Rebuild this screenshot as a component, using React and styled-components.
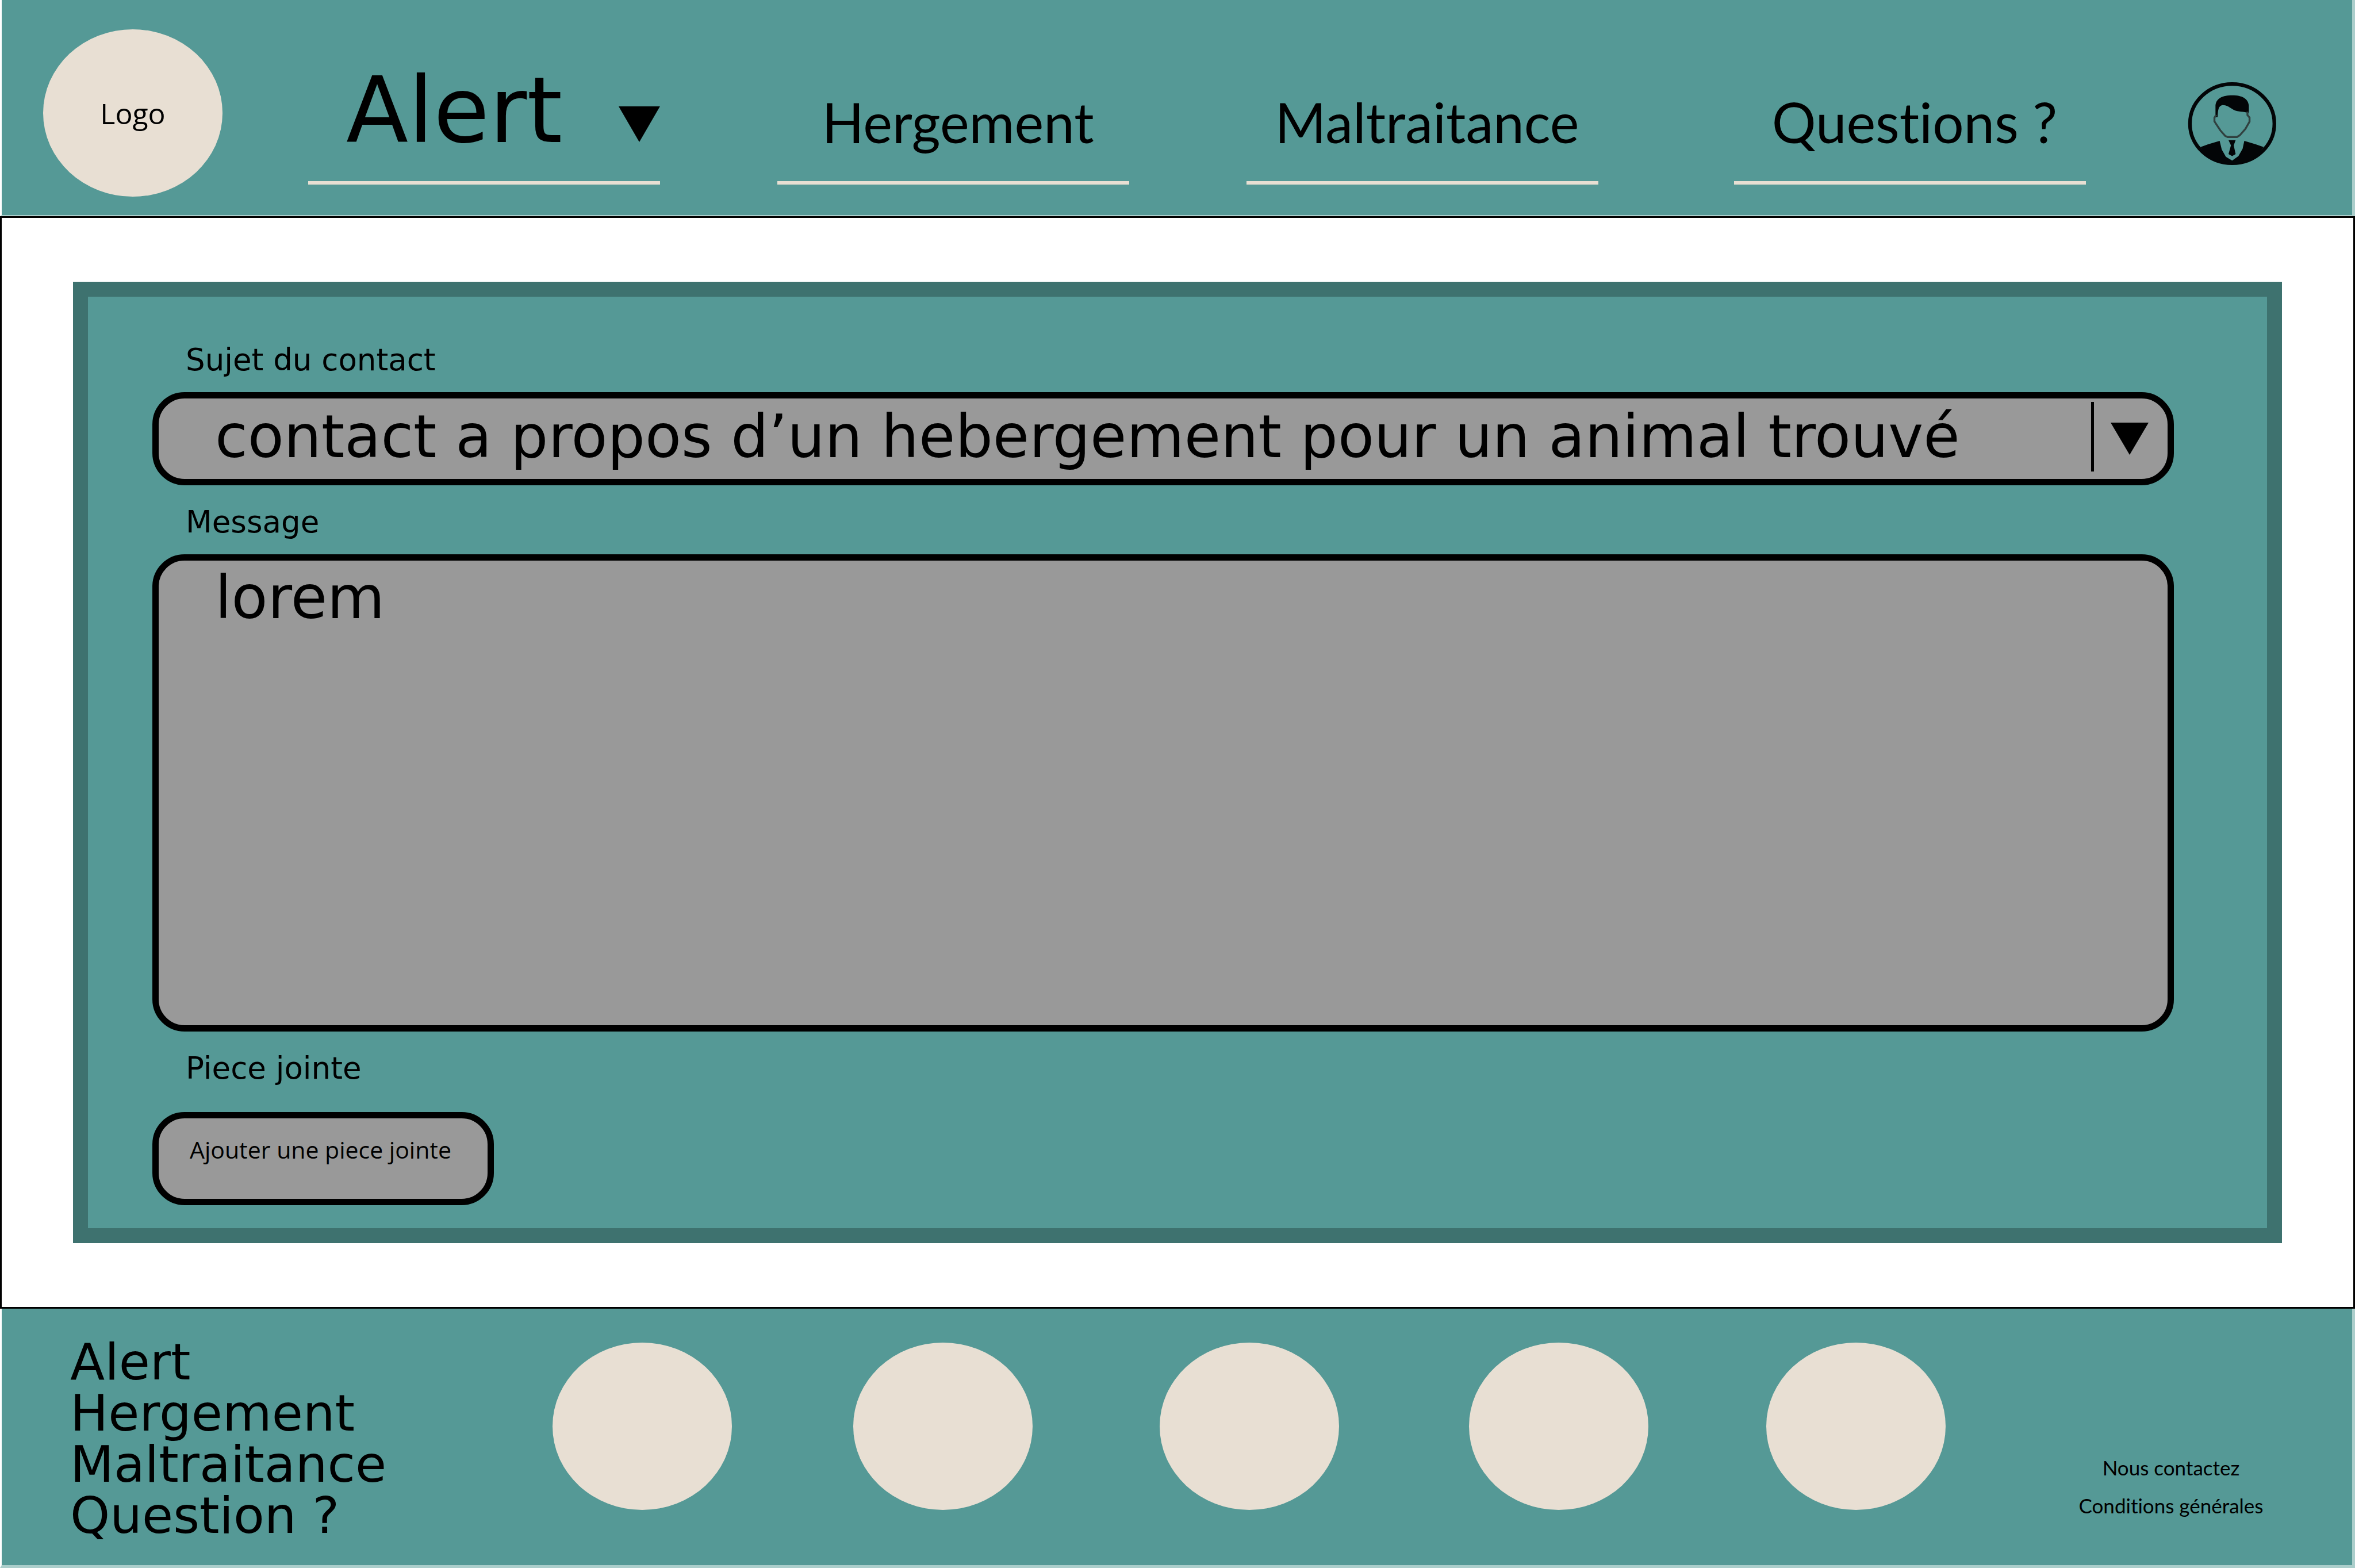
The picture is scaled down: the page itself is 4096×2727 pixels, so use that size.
import React from "react";
import styled, { createGlobalStyle } from "styled-components";

const teal = "#559996";
const tealDark = "#3e726f";
const tealPale = "#abcecb";
const cream = "#e8dfd3";
const grey = "#999999";

const wide = '"DejaVu Sans", "Open Sans", sans-serif';
const regular = '"Open Sans", "Noto Sans", sans-serif';
const narrow = 'Lato, "Open Sans", sans-serif';

const GlobalStyle = createGlobalStyle`
  *, *::before, *::after { box-sizing: border-box; }
  body {
    margin: 0;
    background: #ffffff;
    color: #000000;
    font-family: ${regular};
    font-variant-ligatures: none;
  }
  a { color: inherit; text-decoration: none; }
  ul { list-style: none; margin: 0; padding: 0; }
`;

const Page = styled.div`
  display: flex;
  flex-direction: column;
  min-height: 100vh;
`;

const Header = styled.header`
  display: flex;
  height: 376px;
  padding: 0 131px 0 72px;
  background: ${teal};
  border: solid;
  border-width: 0 5px 2px 3px;
  border-color: ${tealPale} ${tealPale} ${tealPale} #ffffff;
`;

const Disc = styled.span`
  display: flex;
  align-items: center;
  justify-content: center;
  width: 312px;
  height: 291px;
  border-radius: 50%;
  background: ${cream};
`;

const LogoLink = styled.a`
  margin: 51px 149px 0 0;
  font-size: 50px;
  line-height: 64px;
`;

const Nav = styled.nav`
  flex: 1;
  display: grid;
  grid-template-columns: 816fr 816fr 848fr 616fr;
`;

const NavLink = styled.a`
  display: flex;
  align-items: baseline;
  justify-content: ${(p) => (p.$menu ? "flex-start" : "center")};
  gap: 98px;
  width: 612px;
  height: 321px;
  padding: ${(p) => (p.$menu ? "102px 0 0 66px" : "122px 0 0 16px")};
  border-bottom: 6px solid ${cream};
  font-family: ${(p) => (p.$menu ? wide : narrow)};
  font-size: ${(p) => (p.$menu ? 158 : 96)}px;
  line-height: 180px;
  white-space: nowrap;
`;

const NavArrow = styled.svg`
  width: 79px;
  height: 62px;
`;

const Account = styled.a`
  margin: 142px 0 0 173px;
  svg { display: block; width: 155px; height: 146px; }
`;

const Main = styled.main`
  flex: 1;
  display: flex;
  padding: 111px 124px;
  border: 3px solid #000000;
`;

const Form = styled.form`
  flex: 1;
  display: flex;
  flex-direction: column;
  padding: 74px 162px 40px 112px;
  border: 26px solid ${tealDark};
  background: ${teal};
`;

const Label = styled.label`
  margin: 0 0 ${(p) => p.$space || 20}px 58px;
  font-family: ${wide};
  font-size: 53px;
  line-height: 72px;
`;

const SelectBox = styled.div`
  display: grid;
  align-items: center;
  height: 162px;
  margin-bottom: 28px;
  border: 11px solid #000000;
  border-radius: 56px;
  background: ${grey};
  overflow: hidden;
`;

const Select = styled.select`
  grid-area: 1 / 1;
  appearance: none;
  width: 100%;
  height: 140px;
  padding: 0 160px 8px 98px;
  border: 0;
  background: transparent;
  color: #000000;
  font-family: ${wide};
  font-size: 103px;
  line-height: 132px;
`;

const SelectMark = styled.span`
  grid-area: 1 / 1;
  justify-self: end;
  display: flex;
  align-items: center;
  height: 121px;
  margin-bottom: 8px;
  padding: 8px 33px 0 29px;
  border-left: 5px solid #000000;
  pointer-events: none;
  svg { width: 66px; height: 56px; }
`;

const Message = styled.textarea`
  flex: 1;
  display: block;
  width: 100%;
  min-height: 400px;
  margin: 0 0 28px;
  padding: 4px 98px;
  border: 11px solid #000000;
  border-radius: 56px;
  background: ${grey};
  color: #000000;
  font-family: ${wide};
  font-size: 103px;
  line-height: 120px;
  resize: none;
`;

const AttachButton = styled.button`
  align-self: flex-start;
  width: 594px;
  height: 162px;
  padding: 0 0 32px 54px;
  border: 11px solid #000000;
  border-radius: 56px;
  background: ${grey};
  color: #000000;
  font-family: ${regular};
  font-size: 41px;
  line-height: 56px;
  text-align: left;
  white-space: nowrap;
`;

const Footer = styled.footer`
  display: flex;
  height: 451px;
  padding: 0 154px 0 119px;
  background: ${teal};
  border: solid;
  border-width: 0 5px 5px 3px;
  border-color: ${tealPale} ${tealPale} ${tealPale} #ffffff;
`;

const FooterNav = styled.ul`
  width: 839px;
  padding-top: 48px;
  font-family: ${wide};
  font-size: 88px;
  line-height: 89px;
  white-space: nowrap;
`;

const Partners = styled.ul`
  flex: 1;
  display: grid;
  grid-template-columns: 523fr 533fr 538fr 517fr 312fr;
  padding-top: 59px;
`;

const Legal = styled.ul`
  width: 322px;
  margin-left: 231px;
  padding-top: 243px;
  font-family: ${narrow};
  font-size: 35px;
  line-height: 66px;
  text-align: center;
  white-space: nowrap;
`;

const Triangle = () => <path d="M0 0H100L50 100Z" />;

const links = [
  { text: "Alert", menu: true },
  { text: "Hergement" },
  { text: "Maltraitance" },
  { text: "Questions ?" },
];

export default function App() {
  return (
    <Page>
      <GlobalStyle />
      <Header>
        <LogoLink href="#accueil">
          <Disc>Logo</Disc>
        </LogoLink>
        <Nav aria-label="Navigation principale">
          {links.map((l) => (
            <NavLink key={l.text} href="#" $menu={l.menu}>
              {l.text}
              {l.menu && (
                <NavArrow viewBox="0 0 100 100" preserveAspectRatio="none" aria-hidden="true">
                  <Triangle />
                </NavArrow>
              )}
            </NavLink>
          ))}
        </Nav>
        <Account href="#compte" aria-label="Mon compte">
          <svg viewBox="108 78 513 482" aria-hidden="true">
            <ellipse cx="364" cy="319" rx="243" ry="228" fill="none" stroke="#030507" strokeWidth="21" />
            <path
              d="M268 282V215C272 172 310 156 365 156C420 156 456 174 460 215V258C430 248 400 252 374 240C350 228 338 212 308 212C288 216 282 232 280 282Z"
              fill="#030507"
            />
            <path
              d="M272 268L262 285V306L276 328L296 358L324 390L338 396H392L408 386L440 350L464 308V284L452 270V250"
              fill="none"
              stroke="#30403f"
              strokeWidth="11"
            />
            <path
              d="M182 454L225 438L292 418L304 468L328 510L364 532L400 506L424 464L434 418L500 438L545 454C500 520 440 552 364 552C290 552 225 520 182 454Z"
              fill="#030507"
            />
            <path d="M343 414H384L373 444L384 494L364 506L343 494L357 444Z" fill="#030507" />
          </svg>
        </Account>
      </Header>

      <Main>
        <Form>
          <Label htmlFor="sujet">Sujet du contact</Label>
          <SelectBox>
            <Select id="sujet">
              <option>contact a propos d’un hebergement pour un animal trouvé</option>
            </Select>
            <SelectMark>
              <svg viewBox="0 0 100 100" preserveAspectRatio="none" aria-hidden="true">
                <Triangle />
              </svg>
            </SelectMark>
          </SelectBox>
          <Label htmlFor="message">Message</Label>
          <Message id="message" defaultValue="lorem" />
          <Label htmlFor="piece" $space={40}>
            Piece jointe
          </Label>
          <AttachButton id="piece" type="button">
            Ajouter une piece jointe
          </AttachButton>
        </Form>
      </Main>

      <Footer>
        <FooterNav>
          <li><a href="#alert">Alert</a></li>
          <li><a href="#hergement">Hergement</a></li>
          <li><a href="#maltraitance">Maltraitance</a></li>
          <li><a href="#question">Question ?</a></li>
        </FooterNav>
        <Partners>
          {[1, 2, 3, 4, 5].map((n) => (
            <li key={n}>
              <Disc />
            </li>
          ))}
        </Partners>
        <Legal>
          <li><a href="#contact">Nous contactez</a></li>
          <li><a href="#conditions">Conditions générales</a></li>
        </Legal>
      </Footer>
    </Page>
  );
}
